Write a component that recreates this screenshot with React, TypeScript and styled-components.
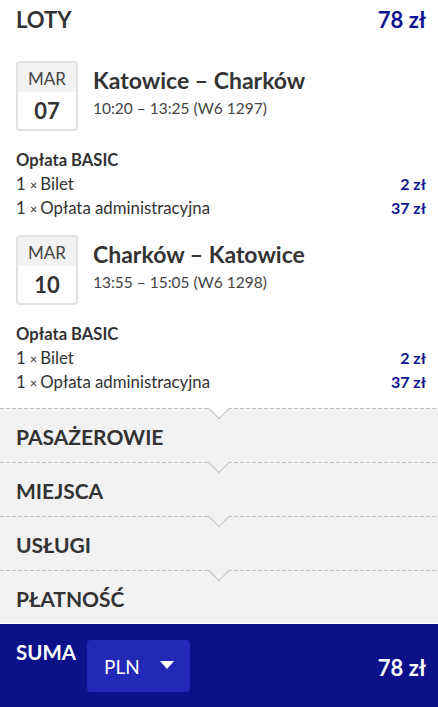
import React from "react";
import styled, { createGlobalStyle } from "styled-components";

const GlobalStyle = createGlobalStyle`
  html, body { margin: 0; padding: 0; background: #fff; }
  body { font-family: Lato, "Noto Sans", sans-serif; color: #333; }
  * { box-sizing: border-box; }
`;

const NAVY = "#0e1590";
const PANEL = "#f2f2f2";

const Page = styled.div`
  width: 438px;
  display: flex;
  flex-direction: column;
`;

const Header = styled.div`
  height: 38px;
  padding: 0 12px 0 16px;
  display: flex;
  align-items: center;
  justify-content: space-between;
`;

const HeaderTitle = styled.div`
  font-size: 22px;
  font-weight: 700;
  color: #333;
`;

const Price = styled.span<{ $size?: number; $light?: boolean }>`
  font-size: ${(p) => p.$size ?? 16}px;
  font-weight: 700;
  color: ${(p) => (p.$light ? "#fff" : NAVY)};
  white-space: nowrap;
`;

const Flight = styled.div<{ $first?: boolean }>`
  padding: ${(p) => (p.$first ? 23 : 15)}px 12px 0 16px;
`;

const FlightHead = styled.div`
  display: flex;
  gap: 15px;
  height: 70px;
`;

const DateBox = styled.div`
  width: 62px;
  height: 70px;
  border: 2px solid #e2e2e2;
  border-radius: 4px;
  display: flex;
  flex-direction: column;
  overflow: hidden;
  flex-shrink: 0;
`;

const Month = styled.div`
  height: 29px;
  background: ${PANEL};
  display: flex;
  align-items: center;
  justify-content: center;
  font-size: 17px;
  color: #444;
  padding-top: 2px;
`;

const Day = styled.div`
  flex: 1;
  display: flex;
  align-items: center;
  justify-content: center;
  font-size: 22px;
  font-weight: 700;
  color: #333;
`;

const Route = styled.div`
  display: flex;
  flex-direction: column;
  padding-top: 5px;
`;

const RouteTitle = styled.div`
  font-size: 23px;
  font-weight: 700;
  line-height: 28px;
  color: #333;
`;

const RouteTime = styled.div`
  font-size: 15.5px;
  line-height: 20px;
  margin-top: 4px;
  color: #444;
`;

const Fare = styled.div`
  margin-top: 17px;
  display: flex;
  flex-direction: column;
`;

const FareName = styled.div`
  font-size: 16.6px;
  font-weight: 700;
  line-height: 24px;
  height: 24px;
  color: #333;
`;

const FareRow = styled.div`
  display: flex;
  justify-content: space-between;
  align-items: center;
  height: 24px;
  font-size: 16.8px;
  line-height: 24px;
  color: #333;
`;

const Times = styled.span`
  font-size: 13px;
  line-height: 0;
  margin: 0 3px 0 4px;
`;

const Sections = styled.div`
  margin-top: 14px;
  display: flex;
  flex-direction: column;
`;

const Section = styled.div<{ $prev: string }>`
  position: relative;
  height: 54px;
  padding-left: 16px;
  display: flex;
  align-items: center;
  background:
    repeating-linear-gradient(to right, #c4c4c4 0 4px, transparent 4px 6px) top left / 100% 1px no-repeat,
    ${PANEL};

  &::before {
    content: "";
    position: absolute;
    left: 50%;
    top: -8px;
    width: 15px;
    height: 15px;
    margin-left: -8px;
    background: ${(p) => p.$prev};
    border-right: 1px solid #c4c4c4;
    border-bottom: 1px solid #c4c4c4;
    transform: rotate(45deg);
  }
`;

const SectionTitle = styled.div`
  position: relative;
  font-size: 21px;
  font-weight: 700;
  color: #333;
  padding-top: 2px;
`;

const Footer = styled.div`
  height: 83px;
  background: #0b1289;
  box-shadow: 0 -1px 0 #fff;
  position: relative;
  display: flex;
  align-items: center;
  padding: 0 12px 0 16px;
`;

const SumLabel = styled.div`
  font-size: 20.5px;
  font-weight: 700;
  color: #fff;
  align-self: flex-start;
  margin-top: 16px;
`;

const CurrencySelect = styled.div`
  margin-left: 11px;
  width: 103px;
  height: 52px;
  border-radius: 4px;
  background: #2229b6;
  display: flex;
  align-items: center;
  padding: 2px 16px 0 17px;
  justify-content: space-between;
  color: #fff;
  font-size: 19px;
`;

const Caret = styled.span`
  width: 0;
  height: 0;
  border-left: 7px solid transparent;
  border-right: 7px solid transparent;
  border-top: 8px solid #fff;
  margin-top: -3px;
`;

const FooterTotal = styled.div`
  margin-left: auto;
  padding-top: 3px;
`;

type Leg = {
  month: string;
  day: string;
  route: string;
  time: string;
};

const legs: Leg[] = [
  { month: "MAR", day: "07", route: "Katowice – Charków", time: "10:20 – 13:25 (W6 1297)" },
  { month: "MAR", day: "10", route: "Charków – Katowice", time: "13:55 – 15:05 (W6 1298)" },
];

const steps = ["PASAŻEROWIE", "MIEJSCA", "USŁUGI", "PŁATNOŚĆ"];

export default function App() {
  return (
    <Page>
      <GlobalStyle />
      <Header>
        <HeaderTitle>LOTY</HeaderTitle>
        <Price $size={22}>78 zł</Price>
      </Header>

      {legs.map((leg, i) => (
        <Flight key={leg.day} $first={i === 0}>
          <FlightHead>
            <DateBox>
              <Month>{leg.month}</Month>
              <Day>{leg.day}</Day>
            </DateBox>
            <Route>
              <RouteTitle>{leg.route}</RouteTitle>
              <RouteTime>{leg.time}</RouteTime>
            </Route>
          </FlightHead>
          <Fare>
            <FareName>Opłata BASIC</FareName>
            <FareRow>
              <span>
                1<Times>×</Times>Bilet
              </span>
              <Price>2 zł</Price>
            </FareRow>
            <FareRow>
              <span>
                1<Times>×</Times>Opłata administracyjna
              </span>
              <Price>37 zł</Price>
            </FareRow>
          </Fare>
        </Flight>
      ))}

      <Sections>
        {steps.map((s, i) => (
          <Section key={s} $prev={i === 0 ? "#fff" : PANEL}>
            <SectionTitle>{s}</SectionTitle>
          </Section>
        ))}
      </Sections>

      <Footer>
        <SumLabel>SUMA</SumLabel>
        <CurrencySelect>
          PLN
          <Caret />
        </CurrencySelect>
        <FooterTotal>
          <Price $size={22} $light>
            78 zł
          </Price>
        </FooterTotal>
      </Footer>
    </Page>
  );
}
